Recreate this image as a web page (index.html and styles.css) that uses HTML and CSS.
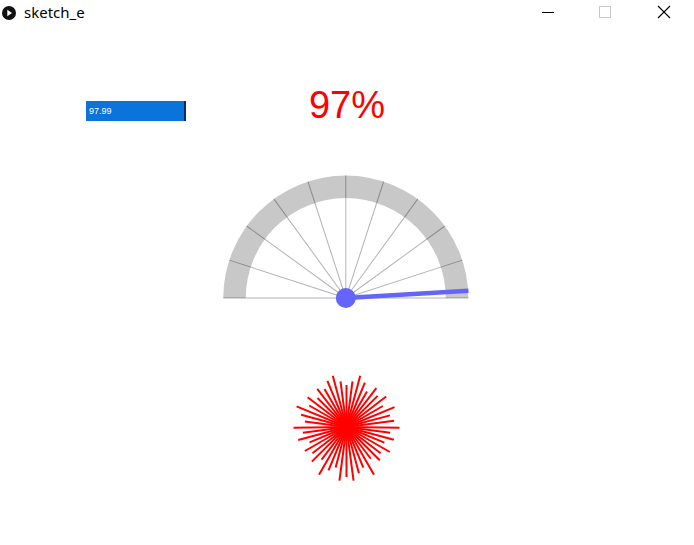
FILE: index.html
```html
<!DOCTYPE html>
<html lang="en">
<head>
<meta charset="utf-8">
<title>sketch_e</title>
<link rel="stylesheet" href="styles.css">
</head>
<body>
<div class="window">
  <header class="titlebar">
    <span class="app-icon">
      <svg width="16" height="16" viewBox="0 0 16 16"><circle cx="8" cy="8" r="7" fill="#111"/><path d="M6.3 4.8 L11 8 L6.3 11.2 Z" fill="#fff"/></svg>
    </span>
    <span class="title">sketch_e</span>
    <div class="controls">
      <span class="ctl ctl-min"><svg width="14" height="14" viewBox="0 0 14 14"><line x1="1" y1="7.5" x2="13" y2="7.5" stroke="#000" stroke-width="1"/></svg></span>
      <span class="ctl ctl-max"><svg width="14" height="14" viewBox="0 0 14 14"><rect x="1.5" y="1.5" width="11" height="11" fill="none" stroke="#c8c8c8" stroke-width="1"/></svg></span>
      <span class="ctl ctl-close"><svg width="14" height="14" viewBox="0 0 14 14"><path d="M1 1 L13 13 M13 1 L1 13" stroke="#000" stroke-width="1.1"/></svg></span>
    </div>
  </header>
  <main class="canvas">
    <svg class="drawing" width="694" height="515" viewBox="0 30 694 515">
      <path class="gauge-band" d="M223.3 298 A122.5 122.5 0 0 1 468.3 298 L445.8 298 A100 100 0 0 0 245.8 298 Z"/>
      <g class="ticks" transform="translate(345.8 298)">
        <line x1="0" y1="0" x2="-122.5" y2="0"/>
        <line x1="0" y1="0" x2="122.5" y2="0"/>
        <line x1="0" y1="0" x2="122.5" y2="0" transform="rotate(-18)"/>
        <line x1="0" y1="0" x2="122.5" y2="0" transform="rotate(-36)"/>
        <line x1="0" y1="0" x2="122.5" y2="0" transform="rotate(-54)"/>
        <line x1="0" y1="0" x2="122.5" y2="0" transform="rotate(-72)"/>
        <line x1="0" y1="0" x2="122.5" y2="0" transform="rotate(-90)"/>
        <line x1="0" y1="0" x2="122.5" y2="0" transform="rotate(-108)"/>
        <line x1="0" y1="0" x2="122.5" y2="0" transform="rotate(-126)"/>
        <line x1="0" y1="0" x2="122.5" y2="0" transform="rotate(-144)"/>
        <line x1="0" y1="0" x2="122.5" y2="0" transform="rotate(-162)"/>
      </g>
      <line class="needle" x1="345.8" y1="298" x2="468.5" y2="290.8"/>
      <circle class="hub" cx="345.8" cy="298" r="10"/>
      <g class="burst" transform="translate(346.5 427)">
        <line x2="53" transform="rotate(0.8)"/>
        <line x2="44" transform="rotate(7.5)"/>
        <line x2="49" transform="rotate(15)"/>
        <line x2="41" transform="rotate(22.5)"/>
        <line x2="50" transform="rotate(30)"/>
        <line x2="43" transform="rotate(37.5)"/>
        <line x2="47" transform="rotate(45)"/>
        <line x2="40" transform="rotate(52.5)"/>
        <line x2="55" transform="rotate(60)"/>
        <line x2="44" transform="rotate(67.5)"/>
        <line x2="48" transform="rotate(75)"/>
        <line x2="54" transform="rotate(82.5)"/>
        <line x2="50" transform="rotate(90)"/>
        <line x2="54" transform="rotate(97.5)"/>
        <line x2="42" transform="rotate(105)"/>
        <line x2="47" transform="rotate(112.5)"/>
        <line x2="55" transform="rotate(120)"/>
        <line x2="41" transform="rotate(127.5)"/>
        <line x2="49" transform="rotate(135)"/>
        <line x2="43" transform="rotate(142.5)"/>
        <line x2="48" transform="rotate(150)"/>
        <line x2="40" transform="rotate(157.5)"/>
        <line x2="50" transform="rotate(165)"/>
        <line x2="44" transform="rotate(172.5)"/>
        <line x2="53" transform="rotate(179.2)"/>
        <line x2="42" transform="rotate(187.5)"/>
        <line x2="47" transform="rotate(195)"/>
        <line x2="54" transform="rotate(202.5)"/>
        <line x2="43" transform="rotate(210)"/>
        <line x2="49" transform="rotate(217.5)"/>
        <line x2="41" transform="rotate(225)"/>
        <line x2="48" transform="rotate(232.5)"/>
        <line x2="44" transform="rotate(240)"/>
        <line x2="50" transform="rotate(247.5)"/>
        <line x2="53" transform="rotate(255)"/>
        <line x2="46" transform="rotate(262.5)"/>
        <line x2="42" transform="rotate(270)"/>
        <line x2="46" transform="rotate(277.5)"/>
        <line x2="53" transform="rotate(285)"/>
        <line x2="48" transform="rotate(292.5)"/>
        <line x2="41" transform="rotate(300)"/>
        <line x2="49" transform="rotate(307.5)"/>
        <line x2="44" transform="rotate(315)"/>
        <line x2="50" transform="rotate(322.5)"/>
        <line x2="42" transform="rotate(330)"/>
        <line x2="52" transform="rotate(337.5)"/>
        <line x2="45" transform="rotate(345)"/>
        <line x2="48" transform="rotate(352.5)"/>
      </g>
    </svg>
    <div class="slider"><span class="slider-value">97.99</span></div>
    <div class="percent">97%</div>
  </main>
</div>
</body>
</html>
```

FILE: styles.css
```css
html, body {
  margin: 0;
  padding: 0;
  background: #fff;
}
.window {
  width: 694px;
  height: 545px;
  overflow: hidden;
  display: flex;
  flex-direction: column;
  background: #fff;
}
.titlebar {
  height: 30px;
  flex: none;
  display: flex;
  align-items: flex-start;
  font-family: "Noto Sans", "Open Sans", sans-serif;
}
.app-icon {
  width: 16px;
  height: 16px;
  margin: 5px 0 0 1px;
}
.app-icon svg { display: block; }
.title {
  margin: 2px 0 0 7px;
  font-size: 15px;
  line-height: 20px;
  color: #000;
}
.controls {
  margin-left: auto;
  display: flex;
}
.ctl {
  width: 58px;
  height: 26px;
  display: flex;
  justify-content: center;
  padding-top: 5px;
  box-sizing: border-box;
}
.ctl svg { display: block; }
.ctl-min { margin-right: -1px; }
.ctl-close { width: 60px; }
.canvas {
  position: relative;
  flex: 1;
}
.drawing {
  position: absolute;
  left: 0;
  top: 0;
  display: block;
}
.gauge-band { fill: #c8c8c8; }
.ticks line {
  stroke: rgba(0, 0, 0, 0.3);
  stroke-width: 1;
}
.needle {
  stroke: #6464ff;
  stroke-width: 4.5;
  stroke-linecap: butt;
}
.hub { fill: #6464ff; }
.burst line {
  stroke: #ff0000;
  stroke-width: 2;
}
.slider {
  position: absolute;
  left: 86px;
  top: 71px;
  width: 98px;
  height: 20px;
  background: #0a74da;
  border-right: 2px solid #062f5f;
  display: flex;
  align-items: center;
}
.slider-value {
  margin-left: 3px;
  font-family: "Liberation Sans", Arial, sans-serif;
  font-size: 9px;
  color: #fff;
}
.percent {
  position: absolute;
  left: 0;
  right: 0;
  top: 56px;
  text-align: center;
  font-family: "Liberation Sans", Arial, sans-serif;
  font-size: 38px;
  line-height: 38px;
  color: #ff0000;
}
```
